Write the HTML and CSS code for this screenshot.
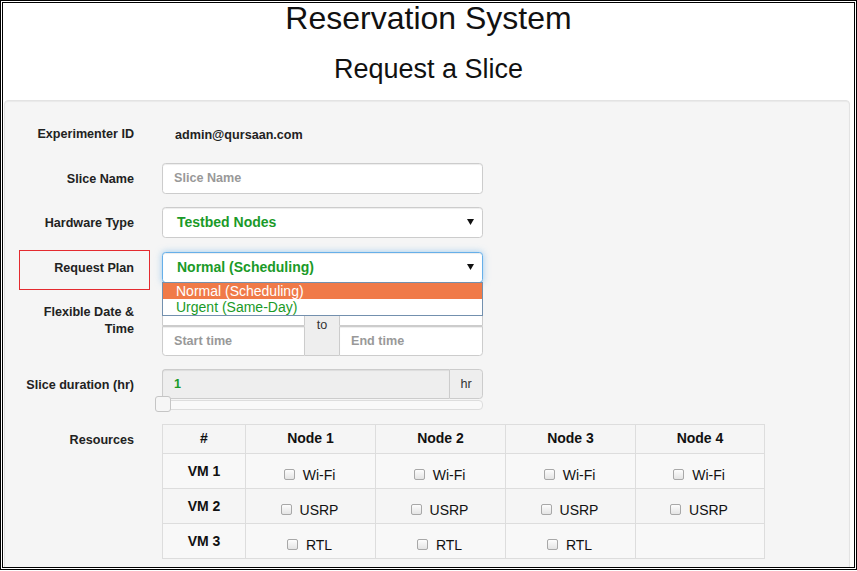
FILE: index.html
```html
<!DOCTYPE html>
<html>
<head>
<meta charset="utf-8">
<title>Reservation System</title>
<link rel="stylesheet" href="styles.css">
</head>
<body>
<div class="frame">
  <h1 class="title">Reservation System</h1>
  <h2 class="subtitle">Request a Slice</h2>
  <form class="well">
    <div class="row">
      <div class="lbl">Experimenter ID</div>
      <div class="ctl static">admin@qursaan.com</div>
    </div>
    <div class="row mt14">
      <div class="lbl">Slice Name</div>
      <div class="ctl"><div class="input"><span class="ph">Slice Name</span></div></div>
    </div>
    <div class="row mt13">
      <div class="lbl">Hardware Type</div>
      <div class="ctl">
        <div class="select"><span>Testbed Nodes</span><svg class="arrow" width="7" height="6" viewBox="0 0 7 6"><path d="M0 0H7L3.5 6Z" fill="#111"/></svg></div>
      </div>
    </div>
    <div class="row mt14">
      <span class="annot"></span>
      <div class="lbl">Request Plan</div>
      <div class="ctl">
        <div class="select focus"><span>Normal (Scheduling)</span><svg class="arrow" width="7" height="6" viewBox="0 0 7 6"><path d="M0 0H7L3.5 6Z" fill="#111"/></svg></div>
        <div class="dropdown">
          <div class="opt sel">Normal (Scheduling)</div>
          <div class="opt">Urgent (Same-Day)</div>
        </div>
      </div>
    </div>
    <div class="row mt13">
      <div class="lbl">Flexible Date &amp; Time</div>
      <div class="ctl">
        <div class="dgrid">
          <div class="input d1"></div>
          <div class="addon to">to</div>
          <div class="input d2"></div>
          <div class="input d3"><span class="ph">Start time</span></div>
          <div class="input d4"><span class="ph">End time</span></div>
        </div>
      </div>
    </div>
    <div class="row mt13">
      <div class="lbl">Slice duration (hr)</div>
      <div class="ctl">
        <div class="dur">
          <div class="dur-input">1</div>
          <div class="addon hr">hr</div>
        </div>
        <div class="slider"><span class="handle"></span></div>
      </div>
    </div>
    <div class="row mt14">
      <div class="lbl">Resources</div>
      <div class="ctl wide">
        <table class="res">
          <colgroup><col class="c0"><col class="c1"><col class="c1"><col class="c1"><col class="c4"></colgroup>
          <thead>
            <tr><th>#</th><th>Node 1</th><th>Node 2</th><th>Node 3</th><th>Node 4</th></tr>
          </thead>
          <tbody>
            <tr class="odd">
              <td class="vm">VM 1</td>
              <td><span class="chk"><span class="cb"></span>Wi-Fi</span></td>
              <td><span class="chk"><span class="cb"></span>Wi-Fi</span></td>
              <td><span class="chk"><span class="cb"></span>Wi-Fi</span></td>
              <td><span class="chk"><span class="cb"></span>Wi-Fi</span></td>
            </tr>
            <tr>
              <td class="vm">VM 2</td>
              <td><span class="chk"><span class="cb"></span>USRP</span></td>
              <td><span class="chk"><span class="cb"></span>USRP</span></td>
              <td><span class="chk"><span class="cb"></span>USRP</span></td>
              <td><span class="chk"><span class="cb"></span>USRP</span></td>
            </tr>
            <tr class="odd">
              <td class="vm">VM 3</td>
              <td><span class="chk"><span class="cb"></span>RTL</span></td>
              <td><span class="chk"><span class="cb"></span>RTL</span></td>
              <td><span class="chk"><span class="cb"></span>RTL</span></td>
              <td></td>
            </tr>
          </tbody>
        </table>
      </div>
    </div>
  </form>
</div>
</body>
</html>
```
FILE: styles.css
```css
* { box-sizing: border-box; }
body {
  margin: 0;
  font-family: "Liberation Sans", Arial, Helvetica, sans-serif;
  color: #333;
  background: #fff;
}
.frame {
  width: 857px;
  height: 570px;
  border: 3px double #000;
  overflow: hidden;
  background: #fff;
}
.title {
  margin: 0;
  font-size: 32px;
  line-height: 30px;
  font-weight: normal;
  text-align: center;
  color: #111;
}
.subtitle {
  margin: 20.6px 0 0;
  font-size: 27px;
  line-height: 30px;
  font-weight: normal;
  text-align: center;
  color: #111;
}
.well {
  margin: 16.4px 4px 0 1px;
  background: #f5f5f5;
  border: 1px solid #e3e3e3;
  border-radius: 4px;
  box-shadow: inset 0 1px 1px rgba(0,0,0,.05);
  padding: 17px 0 20px;
}
.row {
  display: flex;
  align-items: flex-start;
  position: relative;
}
.mt13 { margin-top: 13px; }
.mt14 { margin-top: 14px; }
.lbl {
  width: 129px;
  flex: none;
  padding: 8px 0 0 12px;
  line-height: 17px;
  font-size: 12.6px;
  font-weight: bold;
  text-align: right;
  color: #222;
}
.ctl {
  width: 321px;
  flex: none;
  margin-left: 28px;
  position: relative;
}
.ctl.wide { width: auto; }
.static {
  height: 31px;
  padding-left: 13px;
  padding-top: 2px;
  font-size: 12.6px;
  font-weight: bold;
  line-height: 31px;
  color: #222;
}
.input {
  height: 31px;
  border: 1px solid #ccc;
  border-radius: 3.6px;
  background: #fff;
  padding: 0 11px;
  display: flex;
  align-items: center;
  font-size: 12.6px;
  box-shadow: inset 0 1px 1px rgba(0,0,0,.075);
}
.ph { color: #999; font-weight: bold; }
.select {
  height: 31px;
  border: 1px solid #ccc;
  border-radius: 3.6px;
  background: #fff;
  padding: 0 8px 0 14px;
  display: flex;
  align-items: center;
  justify-content: space-between;
  font-size: 14px;
  font-weight: bold;
  color: #1a9a28;
  box-shadow: inset 0 1px 1px rgba(0,0,0,.075);
}
.select.focus {
  border-color: #66afe9;
  box-shadow: inset 0 1px 1px rgba(0,0,0,.075), 0 0 7px rgba(102,175,233,.6);
}
.arrow { display: block; }
.dropdown {
  position: absolute;
  top: 30px;
  left: 0;
  width: 321px;
  background: #fff;
  border: 1px solid #7390ae;
  z-index: 5;
}
.opt {
  height: 16px;
  line-height: 16px;
  padding-left: 13px;
  font-size: 14px;
  color: #1a9a28;
}
.opt.sel { background: #f07a48; color: #fff; }
.annot {
  position: absolute;
  left: 14px;
  top: -2px;
  width: 131px;
  height: 40px;
  border: 1px solid #e42a2f;
  pointer-events: none;
}
.dgrid {
  display: grid;
  grid-template-columns: 143px 34px 144px;
  grid-template-rows: 30px 30px;
}
.dgrid .input { height: 30px; border-radius: 0; }
.d1 { grid-column: 1; grid-row: 1; border-top-left-radius: 3.6px !important; }
.d2 { grid-column: 3; grid-row: 1; border-top-right-radius: 3.6px !important; }
.d3 { grid-column: 1; grid-row: 2; border-bottom-left-radius: 3.6px !important; }
.d4 { grid-column: 3; grid-row: 2; border-bottom-right-radius: 3.6px !important; }
.addon {
  background: #eee;
  border: 1px solid #ccc;
  font-size: 12.6px;
  color: #333;
  display: flex;
  align-items: center;
  justify-content: center;
}
.to {
  grid-column: 2;
  grid-row: 1 / span 2;
  border-left: 0;
  border-right: 0;
  padding-bottom: 1px;
}
.dur {
  display: flex;
  height: 30px;
}
.dur-input {
  flex: 1;
  background: #eee;
  border: 1px solid #ccc;
  border-right: 0;
  border-radius: 3.6px 0 0 3.6px;
  padding-left: 11px;
  display: flex;
  align-items: center;
  color: #1a9a28;
  font-weight: bold;
  font-size: 12.6px;
  box-shadow: inset 0 1px 1px rgba(0,0,0,.075);
}
.hr {
  width: 34px;
  border-radius: 0 3.6px 3.6px 0;
}
.slider {
  position: relative;
  margin-top: 1px;
  height: 10px;
  border: 1px solid #ddd;
  border-radius: 4px;
  background: #f9f9f9;
}
.handle {
  position: absolute;
  left: -8px;
  top: -5px;
  width: 16px;
  height: 16px;
  background: #f6f6f6;
  border: 1px solid #c5c5c5;
  border-radius: 3px;
}
.res {
  border-collapse: collapse;
  table-layout: fixed;
  width: 602px;
  font-size: 14px;
}
.c0 { width: 83px; }
.c1 { width: 130px; }
.c4 { width: 129px; }
.res th, .res td {
  border: 1px solid #ddd;
  padding: 0;
  text-align: center;
}
.res th {
  height: 29px;
  font-weight: bold;
  color: #111;
  vertical-align: middle;
  padding-bottom: 1px;
}
.res td {
  height: 35px;
  vertical-align: top;
  padding-top: 11px;
  line-height: 20px;
  color: #111;
}
.res tr.odd td { background: #f8f8f8; }
.res td.vm {
  padding-top: 7px;
  font-weight: bold;
}
.chk {
  display: inline-flex;
  align-items: center;
  margin-left: -2px;
}
.cb {
  display: inline-block;
  width: 11px;
  height: 11px;
  border: 1px solid #a8a8a8;
  border-radius: 2px;
  background: linear-gradient(#fdfdfd, #e4e4e4);
  margin-right: 8px;
}
```
